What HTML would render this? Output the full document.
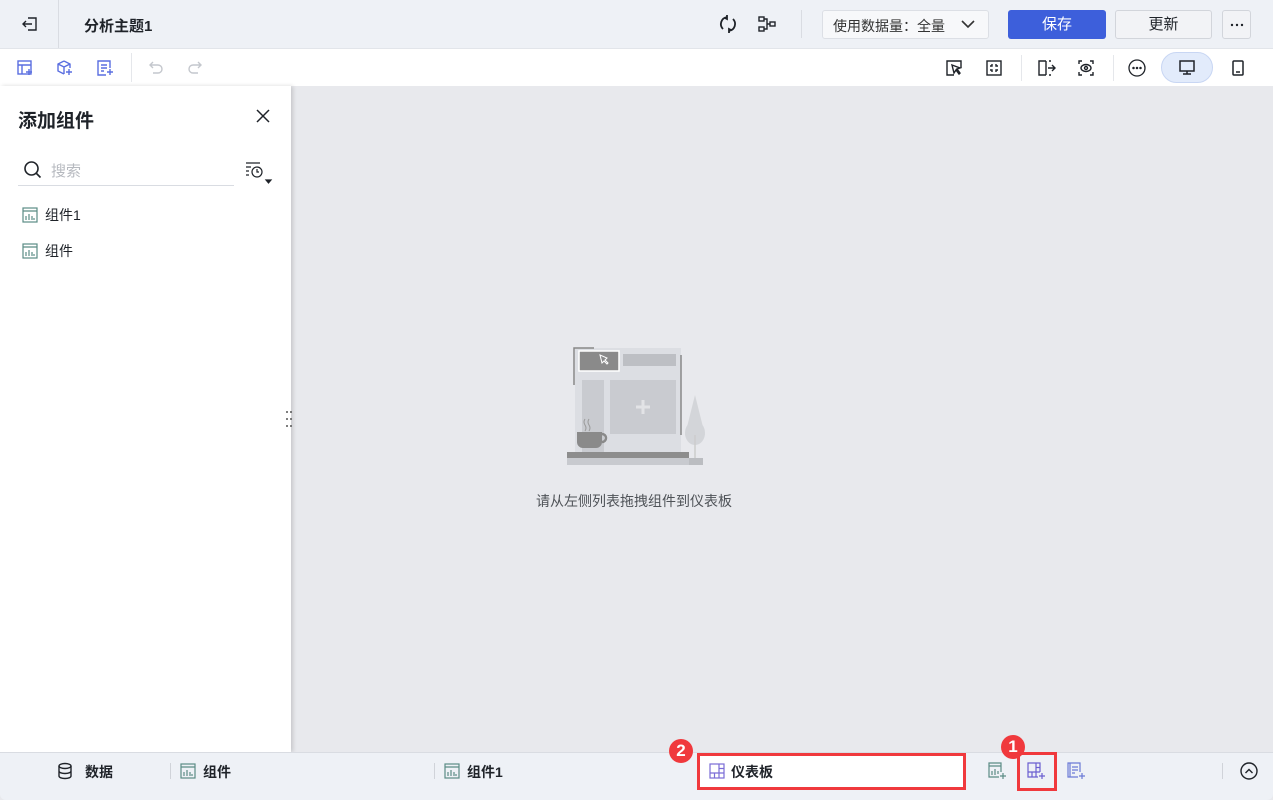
<!DOCTYPE html>
<html><head><meta charset="utf-8"><style>
*{margin:0;padding:0;box-sizing:border-box}
body{width:1273px;height:800px;overflow:hidden;font-family:"Liberation Sans","Noto Sans CJK SC",sans-serif;background:#e8e9ed;position:relative;color:#1f2329}
.abs{position:absolute}
svg{display:block}
</style></head><body>
<div class="abs" style="left:0;top:0;width:1273px;height:49px;background:#eef1f6;border-bottom:1px solid #e2e5ea"></div>
<div class="abs" style="left:58px;top:0;width:1px;height:48px;background:#d9dce2"></div>
<svg class="abs" style="left:21px;top:15px" width="18" height="18" viewBox="0 0 18 18" fill="none" stroke="#1f2329" stroke-width="1.4"><path d="M7 3h8v12H7"/><path d="M11 9H2M5 6L2 9l3 3"/></svg>
<div class="abs" style="left:84px;top:15px;font-size:15px;font-weight:bold">分析主题1</div>
<svg class="abs" style="left:718px;top:14px" width="20" height="20" viewBox="0 0 20 20" fill="none" stroke="#1f2329" stroke-width="1.8"><path d="M5 15A7 7 0 0 1 9 3.1M15 5a7 7 0 0 1-4 11.9"/><path d="M9 1v4l-2-1M11 19v-4l2 1"/></svg>
<svg class="abs" style="left:757px;top:15px" width="20" height="18" viewBox="0 0 20 18" fill="none" stroke="#1f2329" stroke-width="1.4"><rect x="2" y="2" width="5" height="4"/><rect x="2" y="12" width="5" height="4"/><rect x="13" y="7" width="5" height="4"/><path d="M7 4h3v10H7M10 9h3"/></svg>
<div class="abs" style="left:801px;top:10px;width:1px;height:28px;background:#d9dce2"></div>
<div class="abs" style="left:822px;top:10px;width:167px;height:29px;background:#f7f8fa;border:1px solid #dcdfe5;border-radius:3px;font-size:14px;color:#333;padding:5px 0 0 10px">使用数据量：全量
<svg class="abs" style="left:138px;top:9px" width="14" height="9" viewBox="0 0 14 9" fill="none" stroke="#333" stroke-width="1.6"><path d="M1 1l6 6 6-6"/></svg></div>
<div class="abs" style="left:1008px;top:10px;width:98px;height:29px;background:#3d5fdb;border-radius:3px;color:#fff;font-size:15px;text-align:center;line-height:29px">保存</div>
<div class="abs" style="left:1115px;top:10px;width:97px;height:29px;background:#f2f3f6;border:1px solid #d2d5db;border-radius:3px;font-size:15px;text-align:center;line-height:27px">更新</div>
<div class="abs" style="left:1222px;top:10px;width:29px;height:29px;background:#f2f3f6;border:1px solid #d2d5db;border-radius:3px"></div>
<svg class="abs" style="left:1230px;top:23px" width="14" height="4" viewBox="0 0 14 4" fill="#1f2329"><circle cx="2" cy="2" r="1.2"/><circle cx="7" cy="2" r="1.2"/><circle cx="12" cy="2" r="1.2"/></svg>
<div class="abs" style="left:0;top:49px;width:1273px;height:37px;background:#fff"></div>
<svg class="abs" style="left:16px;top:59px" width="18" height="18" viewBox="0 0 18 18" fill="none" stroke="#5a6ee0" stroke-width="1.4"><rect x="2" y="2" width="13" height="13"/><path d="M2 6h13M6 6v9M10 13h6M13 10v6"/></svg>
<svg class="abs" style="left:55px;top:59px" width="18" height="18" viewBox="0 0 18 18" fill="none" stroke="#5a6ee0" stroke-width="1.4"><path d="M9 2l6 3v4M9 2L3 5v7l6 3M3 5l6 3 6-3M9 8v7"/><path d="M11 13h6M14 10v6"/></svg>
<svg class="abs" style="left:96px;top:59px" width="18" height="18" viewBox="0 0 18 18" fill="none" stroke="#5a6ee0" stroke-width="1.4"><path d="M14 9V2H2v14h8M5 6h6M5 9h6M5 12h3M11 13h6M14 10v6"/></svg>
<div class="abs" style="left:131px;top:53px;width:1px;height:29px;background:#e5e7eb"></div>
<svg class="abs" style="left:147px;top:59px" width="18" height="18" viewBox="0 0 18 18" fill="none" stroke="#c4c7cd" stroke-width="1.4"><path d="M4 6h7a4 4 0 0 1 0 8H6M6 3L3 6l3 3"/></svg>
<svg class="abs" style="left:186px;top:59px" width="18" height="18" viewBox="0 0 18 18" fill="none" stroke="#c4c7cd" stroke-width="1.4"><path d="M14 6H7a4 4 0 0 0 0 8h5M12 3l3 3-3 3"/></svg>
<svg class="abs" style="left:945px;top:59px" width="18" height="18" viewBox="0 0 18 18" fill="none" stroke="#1f2329" stroke-width="1.4"><path d="M9 16H2V2h14v7"/><path d="M7 6l8 3-3 1 3 4-1 1-3-4-2 3z"/></svg>
<svg class="abs" style="left:985px;top:59px" width="18" height="18" viewBox="0 0 18 18" fill="none" stroke="#1f2329" stroke-width="1.4"><rect x="2" y="2" width="14" height="14"/><path d="M7 5v2H5M11 5v2h2M7 13v-2H5M11 13v-2h2"/></svg>
<div class="abs" style="left:1021px;top:55px;width:1px;height:26px;background:#e5e7eb"></div>
<svg class="abs" style="left:1037px;top:59px" width="20" height="18" viewBox="0 0 20 18" fill="none" stroke="#1f2329" stroke-width="1.4"><path d="M9 2H2v14h7M9 2v14M12 2h2M12 16h2M11 9h7M15 6l3 3-3 3"/></svg>
<svg class="abs" style="left:1077px;top:59px" width="18" height="18" viewBox="0 0 18 18" fill="none" stroke="#1f2329" stroke-width="1.4"><path d="M2 5V2h3M13 2h3v3M2 13v3h3M13 16h3v-3"/><ellipse cx="9" cy="9" rx="5" ry="3.5"/><circle cx="9" cy="9" r="1.5"/></svg>
<div class="abs" style="left:1113px;top:55px;width:1px;height:26px;background:#e5e7eb"></div>
<svg class="abs" style="left:1127px;top:58px" width="20" height="20" viewBox="0 0 20 20" fill="none" stroke="#1f2329" stroke-width="1.3"><circle cx="10" cy="10" r="8"/><circle cx="6.5" cy="10" r=".6" fill="#1f2329"/><circle cx="10" cy="10" r=".6" fill="#1f2329"/><circle cx="13.5" cy="10" r=".6" fill="#1f2329"/></svg>
<div class="abs" style="left:1161px;top:52px;width:52px;height:31px;background:#e2ebfb;border:1px solid #c8d6f3;border-radius:16px"></div>
<svg class="abs" style="left:1178px;top:59px" width="18" height="18" viewBox="0 0 18 18" fill="none" stroke="#1f2329" stroke-width="1.5"><rect x="2" y="2" width="14" height="10"/><path d="M9 12v3M5 15h8"/></svg>
<svg class="abs" style="left:1229px;top:59px" width="18" height="18" viewBox="0 0 18 18" fill="none" stroke="#1f2329" stroke-width="1.5"><rect x="4" y="2" width="10" height="14" rx="1"/><path d="M7 13h4"/></svg>
<div class="abs" style="left:0;top:86px;width:291px;height:666px;background:#fff;box-shadow:2px 0 4px rgba(0,0,0,.15)"></div>
<div class="abs" style="left:18px;top:106px;font-size:19px;font-weight:bold">添加组件</div>
<svg class="abs" style="left:256px;top:109px" width="14" height="14" viewBox="0 0 14 14" stroke="#1f2329" stroke-width="1.5"><path d="M1 1l12 12M13 1L1 13"/></svg>
<svg class="abs" style="left:23px;top:160px" width="20" height="20" viewBox="0 0 20 20" fill="none" stroke="#1f2329" stroke-width="1.6"><circle cx="8.5" cy="8.5" r="6.5"/><path d="M13.5 13.5l4 4"/></svg>
<div class="abs" style="left:51px;top:160px;font-size:15px;color:#b6b9bf">搜索</div>
<div class="abs" style="left:18px;top:185px;width:216px;height:1px;background:#d9dce2"></div>
<svg class="abs" style="left:245px;top:161px" width="28" height="24" viewBox="0 0 28 24" fill="none" stroke="#1f2329" stroke-width="1.2"><path d="M1 2h14M1 6h5M1 10h3M1 14h3"/><circle cx="12" cy="11" r="5"/><path d="M12 8v3h2"/><path d="M21 19h5l-2.5 3z" fill="#1f2329"/></svg>
<svg class="abs" style="left:22px;top:207px" width="16" height="16" viewBox="0 0 16 16" fill="none" stroke="#5b8c85" stroke-width="1.2"><rect x="1" y="1" width="14" height="14"/><path d="M1 4h14M4 13V9M7 13V7M10 13V9M12 13v-2"/></svg>
<div class="abs" style="left:45px;top:205px;font-size:14px">组件1</div>
<svg class="abs" style="left:22px;top:243px" width="16" height="16" viewBox="0 0 16 16" fill="none" stroke="#5b8c85" stroke-width="1.2"><rect x="1" y="1" width="14" height="14"/><path d="M1 4h14M4 13V9M7 13V7M10 13V9M12 13v-2"/></svg>
<div class="abs" style="left:45px;top:241px;font-size:14px">组件</div>
<svg class="abs" style="left:285px;top:410px" width="8" height="18" viewBox="0 0 8 18" fill="#555"><circle cx="2" cy="2" r="1"/><circle cx="6" cy="2" r="1"/><circle cx="2" cy="9" r="1"/><circle cx="6" cy="9" r="1"/><circle cx="2" cy="16" r="1"/><circle cx="6" cy="16" r="1"/></svg>
<svg class="abs" style="left:565px;top:345px" width="140" height="122" viewBox="0 0 140 122">
<rect x="10" y="3" width="106" height="105" fill="#dcdee3"/>
<path d="M9 40V3h20" stroke="#888" stroke-width="1.5" fill="none"/>
<path d="M116 10v80" stroke="#888" stroke-width="1.5"/>
<rect x="14" y="6" width="40" height="20" fill="#8a8a8a" stroke="#fff" stroke-width="1.5"/>
<path d="M35 10l2 8 2-2 3 3 1-1-3-3 2-2z" fill="none" stroke="#fff" stroke-width="1"/>
<rect x="58" y="9" width="53" height="12" fill="#bdbfc4"/>
<rect x="17" y="35" width="22" height="72" fill="#c9cbd0"/>
<rect x="45" y="35" width="66" height="54" fill="#c9cbd0"/>
<path d="M78 55v14M71 62h14" stroke="#e2e3e6" stroke-width="3"/>
<path d="M12 87h25v10a6 6 0 0 1-6 6H18a6 6 0 0 1-6-6z" fill="#8a8a8a"/>
<path d="M37 89a4 4 0 0 1 0 8" stroke="#8a8a8a" stroke-width="2.5" fill="none"/>
<path d="M20 74q-2 3 0 6q2 3 0 6M24 74q-2 3 0 6q2 3 0 6" stroke="#999" fill="none"/>
<rect x="2" y="107" width="122" height="6" fill="#8d8d8d"/>
<rect x="2" y="113" width="122" height="7" fill="#c8cacf"/>
<path d="M130 50l10 40h-20z" fill="#d3d5d9"/>
<ellipse cx="130" cy="88" rx="10" ry="12" fill="#d3d5d9"/>
<rect x="124" y="113" width="14" height="7" fill="#bbbdc1"/>
<path d="M130 90v23" stroke="#ccc" stroke-width="1.5"/>
</svg>
<div class="abs" style="left:536px;top:491px;font-size:14px;color:#4e5257">请从左侧列表拖拽组件到仪表板</div>
<div class="abs" style="left:0;top:752px;width:1273px;height:48px;background:#eef1f6;border-top:1px solid #d9dce2;border-radius:0 0 6px 6px"></div>
<svg class="abs" style="left:57px;top:762px" width="16" height="18" viewBox="0 0 16 18" fill="none" stroke="#1f2329" stroke-width="1.4"><ellipse cx="8" cy="4" rx="6" ry="2.5"/><path d="M2 4v10c0 1.5 2.7 2.5 6 2.5s6-1 6-2.5V4M2 9c0 1.5 2.7 2.5 6 2.5s6-1 6-2.5"/></svg>
<div class="abs" style="left:85px;top:762px;font-size:14px;font-weight:bold">数据</div>
<div class="abs" style="left:170px;top:763px;width:1px;height:16px;background:#d0d3d9"></div>
<svg class="abs" style="left:180px;top:763px" width="16" height="16" viewBox="0 0 16 16" fill="none" stroke="#5b8c85" stroke-width="1.2"><rect x="1" y="1" width="14" height="14"/><path d="M1 4h14M4 13V9M7 13V7M10 13V9M12 13v-2"/></svg>
<div class="abs" style="left:203px;top:762px;font-size:14px;font-weight:bold">组件</div>
<div class="abs" style="left:434px;top:763px;width:1px;height:16px;background:#d0d3d9"></div>
<svg class="abs" style="left:444px;top:763px" width="16" height="16" viewBox="0 0 16 16" fill="none" stroke="#5b8c85" stroke-width="1.2"><rect x="1" y="1" width="14" height="14"/><path d="M1 4h14M4 13V9M7 13V7M10 13V9M12 13v-2"/></svg>
<div class="abs" style="left:467px;top:762px;font-size:14px;font-weight:bold">组件1</div>
<div class="abs" style="left:697px;top:753px;width:269px;height:37px;background:#fff;border:3px solid #f0393d"></div>
<svg class="abs" style="left:709px;top:763px" width="16" height="16" viewBox="0 0 16 16" fill="none" stroke="#7a6cd6" stroke-width="1.2"><rect x="1" y="1" width="14" height="14"/><path d="M1 10h14M10 1v14M5.5 10v5M10 5.5h5"/></svg>
<div class="abs" style="left:731px;top:762px;font-size:14px;font-weight:bold">仪表板</div>
<div class="abs" style="left:669px;top:739px;width:24px;height:24px;border-radius:50%;background:#f0393d;color:#fff;font-size:17px;font-weight:bold;text-align:center;line-height:24px">2</div>
<svg class="abs" style="left:988px;top:762px" width="20" height="18" viewBox="0 0 20 18" fill="none" stroke="#5b8c85" stroke-width="1.2"><path d="M13 10V1H1v14h10M1 4h12M4 13V9M7 13V7M10 12V9M12 14h6M15 11v6"/></svg>
<div class="abs" style="left:1017px;top:752px;width:40px;height:39px;border:3px solid #f0393d"></div>
<svg class="abs" style="left:1027px;top:762px" width="20" height="18" viewBox="0 0 20 18" fill="none" stroke="#6b5fd0" stroke-width="1.2"><path d="M13 10V1H1v14h10M1 10h12M9 1v14M5 10v5M9 5.5h4M12 14h6M15 11v6"/></svg>
<div class="abs" style="left:1001px;top:735px;width:24px;height:24px;border-radius:50%;background:#f0393d;color:#fff;font-size:17px;font-weight:bold;text-align:center;line-height:24px">1</div>
<svg class="abs" style="left:1067px;top:762px" width="20" height="18" viewBox="0 0 20 18" fill="none" stroke="#6b7ad6" stroke-width="1.2"><path d="M13 10V1H1v14h10M3 1v14M5 5h6M5 8h6M5 11h3M12 14h6M15 11v6"/></svg>
<div class="abs" style="left:1222px;top:763px;width:1px;height:16px;background:#d0d3d9"></div>
<svg class="abs" style="left:1239px;top:761px" width="20" height="20" viewBox="0 0 20 20" fill="none" stroke="#1f2329" stroke-width="1.4"><circle cx="10" cy="10" r="8"/><path d="M6.5 12l3.5-3.5 3.5 3.5"/></svg>
</body></html>
